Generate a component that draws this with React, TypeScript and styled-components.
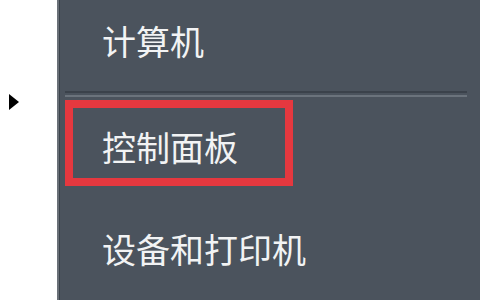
import styled, { createGlobalStyle } from "styled-components";

const GlobalStyle = createGlobalStyle`
    html, body {
        margin: 0;
        padding: 0;
        background: #ffffff;
    }
    #root {
        width: 480px;
        height: 300px;
        overflow: hidden;
    }
`

interface Item {
    label: string;
    active?: boolean;
}

const items: Item[] = [
    { label: "计算机" },
    { label: "控制面板", active: true },
    { label: "设备和打印机" },
];

const App = () => {
    return (
        <>
            <GlobalStyle />
            <ScreenStyle>
                <GutterStyle>
                    <Arrow />
                </GutterStyle>
                <PanelStyle>
                    <MenuItemStyle $height={80}>{items[0].label}</MenuItemStyle>
                    <SeparatorStyle />
                    <HighlightStyle>{items[1].label}</HighlightStyle>
                    <MenuItemStyle $height={80} $top={22}>{items[2].label}</MenuItemStyle>
                </PanelStyle>
            </ScreenStyle>
        </>
    )
};

const ScreenStyle = styled.div`
    display: flex;
    width: 480px;
    height: 300px;
    font-family: "Noto Sans CJK SC", "Noto Sans", sans-serif;
`

const GutterStyle = styled.div`
    width: 57px;
    flex-shrink: 0;
    background: #ffffff;
    padding-top: 94px;
    padding-left: 9px;
    box-sizing: border-box;
`

const Arrow = styled.div`
    width: 0;
    height: 0;
    border-top: 8px solid transparent;
    border-bottom: 8px solid transparent;
    border-left: 10px solid #000000;
`

const PanelStyle = styled.div`
    flex: 1;
    display: flex;
    flex-direction: column;
    background: #4b535d;
    border-left: 2px solid #6a7078;
    box-shadow: inset 1px 0 0 #3c434c;
    padding-left: 6px;
`

interface MenuItemProps {
    $height: number;
    $top?: number;
};

const MenuItemStyle = styled.div<MenuItemProps>`
    display: flex;
    align-items: center;
    height: ${(props) => props.$height}px;
    margin-top: ${(props) => props.$top ?? 0}px;
    padding-left: 37px;
    color: #f2f3f4;
    font-size: 34px;
    flex-shrink: 0;
`

const SeparatorStyle = styled.div`
    height: 2px;
    margin: 11px 13px 0 0;
    border-top: 2px solid #3b424b;
    border-bottom: 2px solid #6b737c;
    flex-shrink: 0;
`

const HighlightStyle = styled.div`
    display: flex;
    align-items: center;
    width: 228px;
    height: 86px;
    box-sizing: border-box;
    margin-top: 3px;
    padding: 6px 0 0 29px;
    border: 8px solid #e5383f;
    color: #f2f3f4;
    font-size: 34px;
    flex-shrink: 0;
`

export default App;
